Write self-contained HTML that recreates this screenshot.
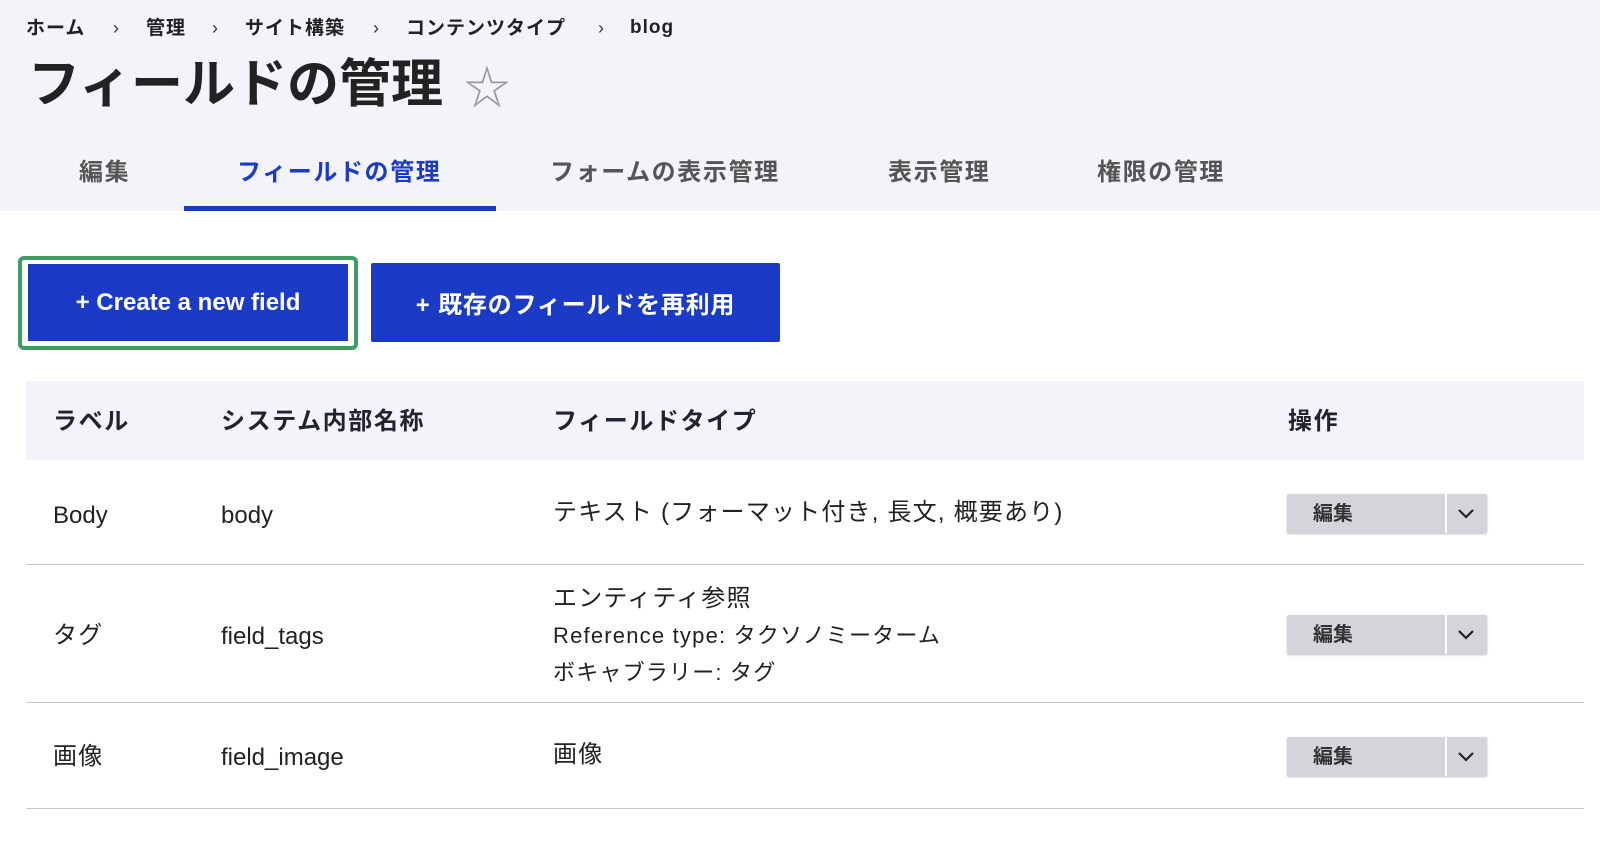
<!DOCTYPE html>
<html><head><meta charset="utf-8"><style>
*{box-sizing:border-box;margin:0;padding:0}
body{width:1600px;height:844px;background:#fff;font-family:"Liberation Sans","Noto Sans CJK JP",sans-serif;color:#222330;position:relative;overflow:hidden}
.head{position:absolute;left:0;top:0;width:1600px;height:211px;background:#f3f4f9}
.abs{position:absolute;white-space:nowrap}
.bc{top:13px;font-size:19px;font-weight:bold;color:#222;letter-spacing:1px}
.sep{top:18px;font-size:18px;color:#333}
h1{position:absolute;left:28px;top:42px;font-size:52px;font-weight:bold;color:#222;letter-spacing:0px}
.star{left:464px;top:52px;font-size:46px;color:#999}
.tab{top:152px;font-size:24px;font-weight:bold;color:#555;letter-spacing:1.6px}
.btn{position:absolute;top:263px;height:79px;background:#1b3bc6;color:#fff;font-size:24px;font-weight:bold;display:flex;align-items:center;justify-content:center;border-radius:2px}
.th{position:absolute;left:26px;top:381px;width:1558px;height:79px;background:#f3f4f9}
.hc{top:401px;font-size:24px;font-weight:bold;letter-spacing:1.6px}
.td{font-size:24px;color:#222}
.j{letter-spacing:1.2px}
.line{position:absolute;left:26px;width:1558px;height:1px;background:#c8c8cc}
.op{position:absolute;left:1287px;width:200px;height:39px;background:#d4d5db;border-radius:2px;box-shadow:0 1px 2px rgba(0,0,0,.25)}
.op span{position:absolute;left:26px;top:3px;font-size:20px;font-weight:bold;color:#333}
.op i{position:absolute;left:158px;top:0;width:2px;height:39px;background:#fff}
.op svg{position:absolute;left:170px;top:14px}
</style></head><body>
<div class="head"></div>
<div class="abs bc" style="left:26px">ホーム</div>
<div class="abs sep" style="left:113px">›</div>
<div class="abs bc" style="left:146px">管理</div>
<div class="abs sep" style="left:212px">›</div>
<div class="abs bc" style="left:245px">サイト構築</div>
<div class="abs sep" style="left:373px">›</div>
<div class="abs bc" style="left:406px">コンテンツタイプ</div>
<div class="abs sep" style="left:598px">›</div>
<div class="abs bc" style="left:630px;top:17px">blog</div>
<h1>フィールドの管理</h1>
<div class="abs star">☆</div>
<div class="abs tab" style="left:79px">編集</div>
<div class="abs tab" style="left:237px;color:#1b3bc6">フィールドの管理</div>
<div class="abs" style="left:184px;top:206px;width:312px;height:5px;background:#1b3bc6"></div>
<div class="abs tab" style="left:550px">フォームの表示管理</div>
<div class="abs tab" style="left:888px">表示管理</div>
<div class="abs tab" style="left:1097px">権限の管理</div>
<div class="abs" style="left:18px;top:256px;width:340px;height:94px;border:4px solid #3f9c63;border-radius:6px"></div>
<div class="btn" style="left:26px;width:324px;border:2px solid #fff;top:262px;height:81px">+ Create a new field</div>
<div class="btn" style="left:371px;width:409px;letter-spacing:0.8px">+ 既存のフィールドを再利用</div>
<div class="th"></div>
<div class="abs hc" style="left:53px">ラベル</div>
<div class="abs hc" style="left:221px">システム内部名称</div>
<div class="abs hc" style="left:553px">フィールドタイプ</div>
<div class="abs hc" style="left:1288px">操作</div>
<div class="abs td" style="left:53px;top:502px">Body</div>
<div class="abs td" style="left:221px;top:502px">body</div>
<div class="abs td j" style="left:553px;top:492px">テキスト (フォーマット付き, 長文, 概要あり)</div>
<div class="op" style="top:494px"><span>編集</span><i></i><svg width="18" height="12"><path d="M2 2l7 7 7-7" stroke="#222" stroke-width="2.2" fill="none"/></svg></div>
<div class="line" style="top:564px"></div>
<div class="abs td j" style="left:53px;top:615px">タグ</div>
<div class="abs td" style="left:221px;top:623px">field_tags</div>
<div class="abs td j" style="left:553px;top:578px">エンティティ参照</div>
<div class="abs td j" style="left:553px;top:618px;font-size:22px">Reference type: タクソノミーターム</div>
<div class="abs td j" style="left:553px;top:655px;font-size:22px">ボキャブラリー: タグ</div>
<div class="op" style="top:615px"><span>編集</span><i></i><svg width="18" height="12"><path d="M2 2l7 7 7-7" stroke="#222" stroke-width="2.2" fill="none"/></svg></div>
<div class="line" style="top:702px"></div>
<div class="abs td j" style="left:53px;top:736px">画像</div>
<div class="abs td" style="left:221px;top:744px">field_image</div>
<div class="abs td j" style="left:553px;top:734px">画像</div>
<div class="op" style="top:737px"><span>編集</span><i></i><svg width="18" height="12"><path d="M2 2l7 7 7-7" stroke="#222" stroke-width="2.2" fill="none"/></svg></div>
<div class="line" style="top:808px"></div>
</body></html>
